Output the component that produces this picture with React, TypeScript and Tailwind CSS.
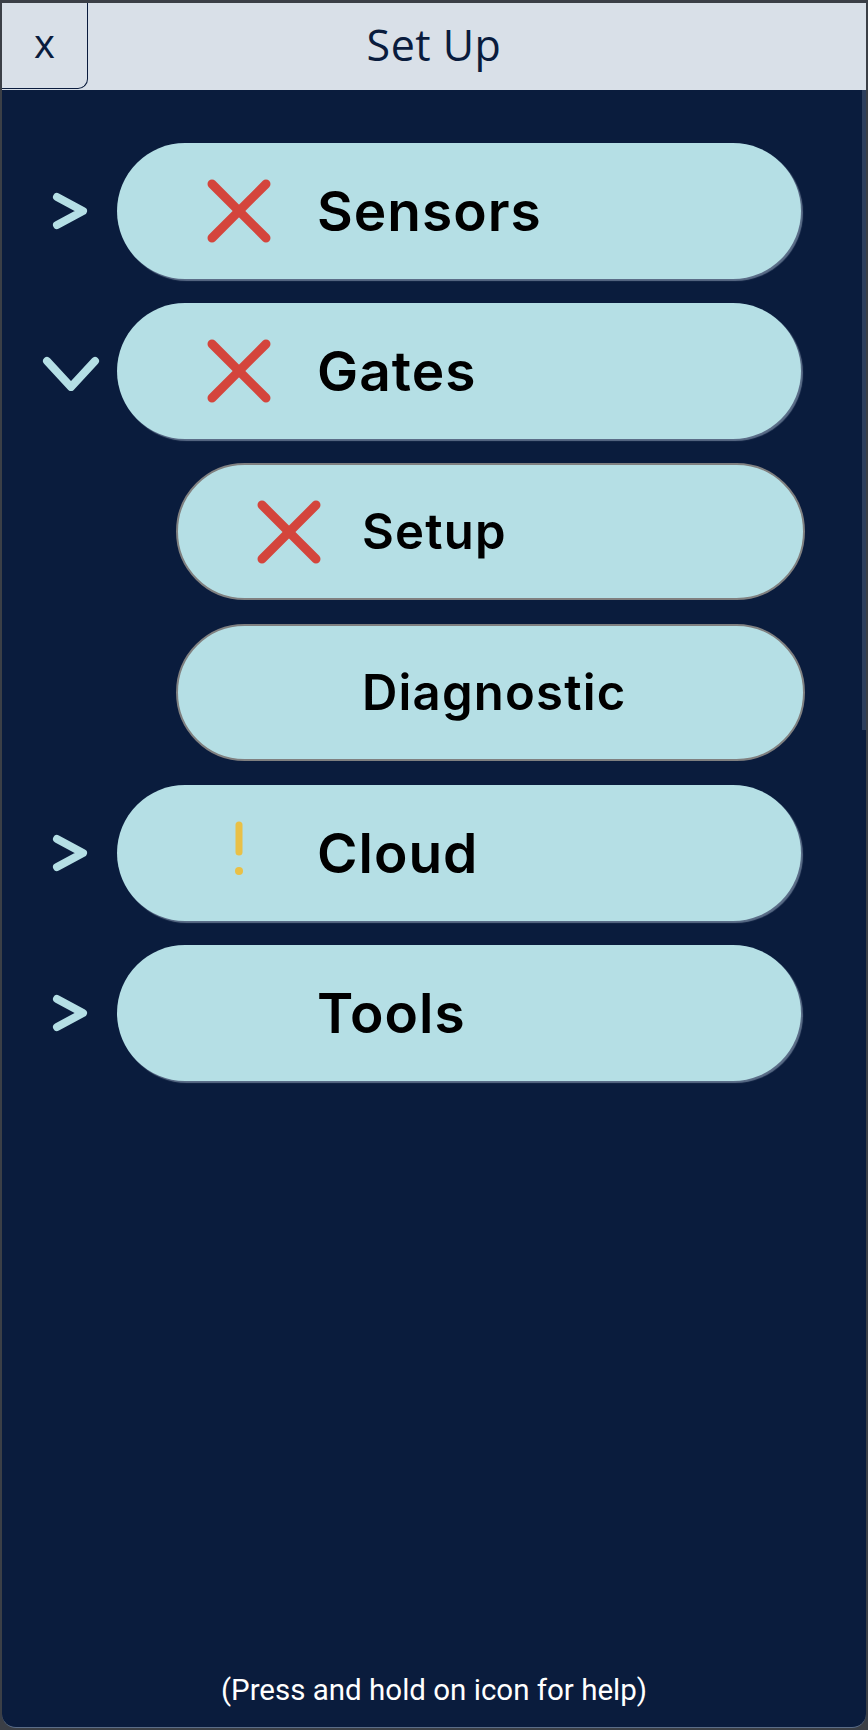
import React from "react";

const Chevron = ({ open }: { open?: boolean }) =>
  open ? (
    <svg width="60" height="40" viewBox="0 0 60 40" className="block">
      <polyline points="7,10 31,36 55,10" fill="none" stroke="#b5dfe5" strokeWidth="8" strokeLinecap="round" strokeLinejoin="round" />
    </svg>
  ) : (
    <svg width="40" height="40" viewBox="0 0 40 40" className="block">
      <polyline points="7,6 33,20 7,34" fill="none" stroke="#b5dfe5" strokeWidth="8" strokeLinecap="round" strokeLinejoin="round" />
    </svg>
  );

const XIcon = () => (
  <svg width="66" height="66" viewBox="0 0 66 66" className="block">
    <line x1="6" y1="6" x2="60" y2="60" stroke="#d4453c" strokeWidth="9" strokeLinecap="round" />
    <line x1="60" y1="6" x2="6" y2="60" stroke="#d4453c" strokeWidth="9" strokeLinecap="round" />
  </svg>
);

const Warn = () => (
  <svg width="66" height="66" viewBox="0 0 66 66" className="block">
    <line x1="33" y1="5" x2="33" y2="32" stroke="#e9c046" strokeWidth="7" strokeLinecap="round" />
    <circle cx="33" cy="51" r="4" fill="#e9c046" />
  </svg>
);

const font = { fontFamily: "Inter, 'Noto Sans', sans-serif" };

function MainRow({ label, icon, open }: { label: string; icon?: React.ReactNode; open?: boolean }) {
  return (
    <div className="flex items-center">
      <div className="w-[115px] flex justify-center pl-[20px]">
        <Chevron open={open} />
      </div>
      <div className="w-[684px] h-[136px] rounded-full bg-[#b5dfe5] shadow-[2px_2px_1px_#5b6d88] flex items-center pl-[89px]">
        <div className="w-[66px] h-[66px] flex items-center justify-center">{icon}</div>
        <div className="ml-[45px] text-[55px] font-semibold text-black tracking-[1px]" style={font}>
          {label}
        </div>
      </div>
    </div>
  );
}

function SubRow({ label, icon }: { label: string; icon?: React.ReactNode }) {
  return (
    <div className="flex items-center pl-[174px]">
      <div className="w-[629px] h-[137px] rounded-full bg-[#b5dfe5] border-2 border-[#808080] flex items-center pl-[78px]">
        <div className="w-[66px] h-[66px] flex items-center justify-center">{icon}</div>
        <div className="ml-[40px] text-[49px] font-semibold text-black tracking-[1.2px]" style={font}>
          {label}
        </div>
      </div>
    </div>
  );
}

export default function App() {
  return (
    <div className="w-[868px] h-[1730px] bg-[#3b3f46] pt-[3px] px-[2px]">
      <div className="relative w-[864px] h-[1725px] flex flex-col bg-[#0a1c3d] rounded-b-[14px] overflow-hidden border-b border-[#5b6d88]">
        <div className="h-[87px] bg-[#d9e0e8] grid grid-cols-[86px_1fr_86px] items-center">
          <div className="h-[86px] self-start border-r border-b border-[#0a1c3d] rounded-br-[10px] flex items-center justify-center text-[40px] text-[#0a1c3d] leading-none pb-[6px]" style={{ fontFamily: "'Open Sans', sans-serif" }}>
            x
          </div>
          <div className="text-center text-[43px] text-[#0a1c3d] leading-none pb-[4px] tracking-[0.5px]" style={{ fontFamily: "'Open Sans', sans-serif" }}>
            Set Up
          </div>
          <div />
        </div>
        <div className="flex-1 flex flex-col gap-[24px] pt-[53px]">
          <MainRow label="Sensors" icon={<XIcon />} />
          <MainRow label="Gates" icon={<XIcon />} open />
          <SubRow label="Setup" icon={<XIcon />} />
          <SubRow label="Diagnostic" />
          <MainRow label="Cloud" icon={<Warn />} />
          <MainRow label="Tools" />
        </div>
        <div className="text-center text-white text-[29.5px] leading-[34px] mb-[20px]" style={{ fontFamily: "Roboto, sans-serif" }}>
          (Press and hold on icon for help)
        </div>
        <div className="absolute right-0 top-[87px] w-[4px] h-[640px] bg-[#2d3e5c]" />
      </div>
    </div>
  );
}
